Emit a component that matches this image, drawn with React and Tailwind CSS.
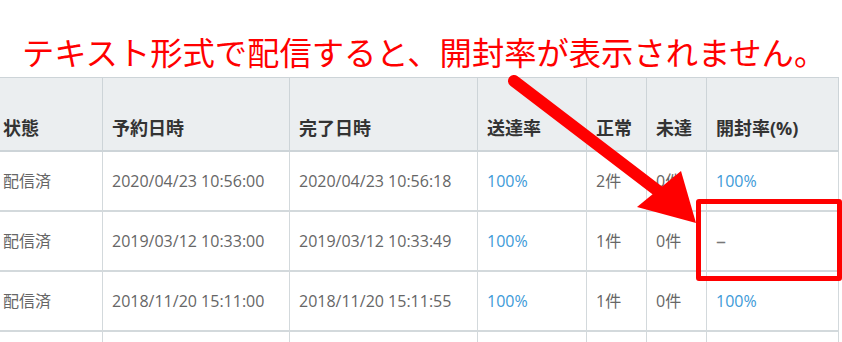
import React from "react";

const cols = "grid grid-cols-[109px_187px_188px_109px_60px_60px_132px]";

const rows = [
  ["配信済", "2020/04/23 10:56:00", "2020/04/23 10:56:18", "100%", "2件", "0件", "100%"],
  ["配信済", "2019/03/12 10:33:00", "2019/03/12 10:33:49", "100%", "1件", "0件", "–"],
  ["配信済", "2018/11/20 15:11:00", "2018/11/20 15:11:55", "100%", "1件", "0件", "100%"],
];

const heads = ["状態", "予約日時", "完了日時", "送達率", "正常", "未達", "開封率(%)"];

export default function App() {
  return (
    <div className="relative w-[842px] h-[342px] overflow-hidden bg-white" style={{ fontFamily: '"Open Sans","Noto Sans CJK JP",sans-serif' }}>
      <div className="h-[77px] pl-[22px] pt-[32px] text-[32.3px] leading-[38px] text-[#ff0000] whitespace-nowrap" style={{ fontFamily: '"Noto Sans CJK JP",sans-serif' }}>
        テキスト形式で配信すると、開封率が表示されません。
      </div>
      <div className="-ml-[7px] w-[846px] border-t border-l border-[#cdd4d8]">
        <div className={`${cols} h-[74px] bg-[#ebeef0]`}>
          {heads.map((h, i) => (
            <div key={i} className="flex items-end px-[9px] pb-[8px] border-r border-b-2 border-[#cdd4d8] text-[18px] leading-[27px] font-bold text-[#333333] whitespace-nowrap">
              {h}
            </div>
          ))}
        </div>
        {rows.map((r, ri) => (
          <div key={ri} className={`${cols} h-[60px]`}>
            {r.map((c, ci) => (
              <div
                key={ci}
                className={`flex items-center px-[9px] border-r border-b-2 border-[#d3d9dc] whitespace-nowrap ${
                  c === "–" ? "text-[20px] text-[#777777]" : "text-[16px]"
                } ${ci === 3 || (ci === 6 && c !== "–") ? "text-[#3d9ad8]" : "text-[#666666]"}`}
              >
                {c}
              </div>
            ))}
          </div>
        ))}
        <div className={`${cols} h-[60px]`}>
          {heads.map((h, i) => (
            <div key={i} className="border-r border-[#d3d9dc]" />
          ))}
        </div>
      </div>

      <div className="absolute left-[696px] top-[199px] w-[146px] h-[82px] border-[5px] border-[#ff0000] rounded-[3px]" />

      <svg className="absolute left-0 top-0 pointer-events-none" width="842" height="342" viewBox="0 0 842 342">
        <line x1="514" y1="81" x2="662" y2="194" stroke="#ff0000" strokeWidth="12" strokeLinecap="round" />
        <polygon points="637,207 681,171 696,223" fill="#ff0000" />
      </svg>
    </div>
  );
}
